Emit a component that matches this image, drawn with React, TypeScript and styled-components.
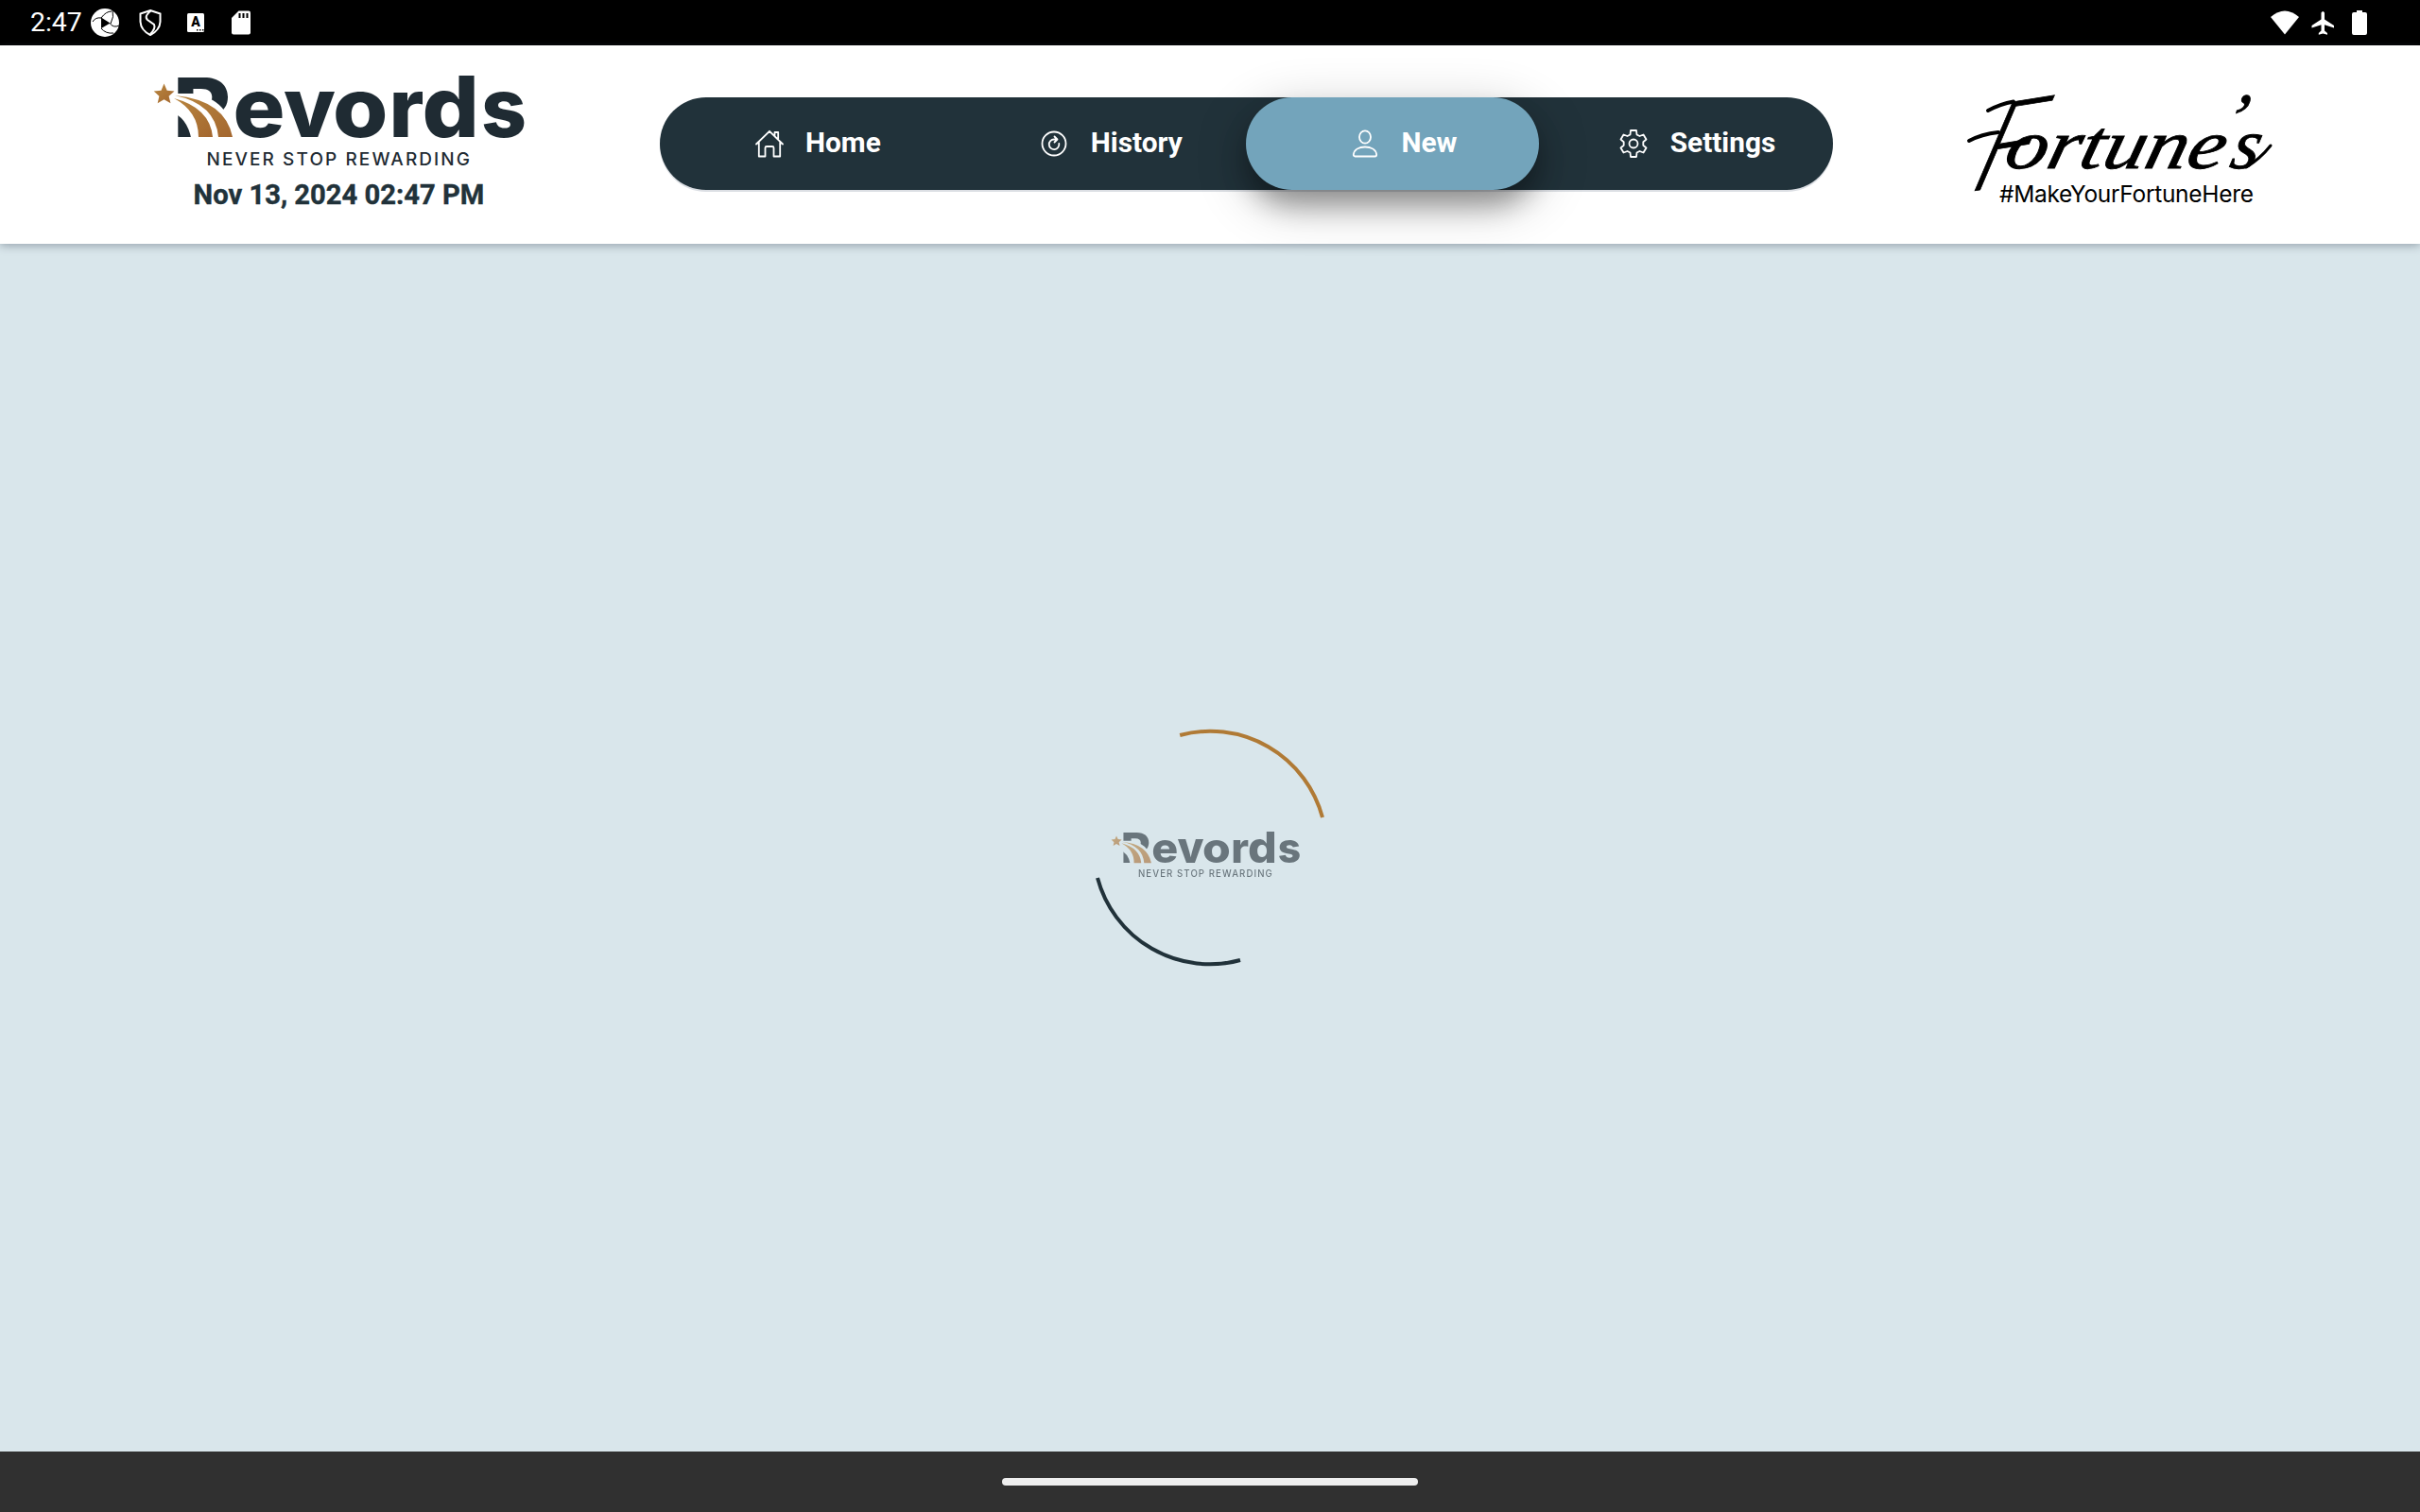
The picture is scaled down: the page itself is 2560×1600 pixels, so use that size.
import React from "react";
import styled, { createGlobalStyle } from "styled-components";

const Global = createGlobalStyle`
  * { box-sizing: border-box; }
  body { margin: 0; background: #d9e6eb; font-family: Roboto, "Liberation Sans", sans-serif; }
  svg { overflow: visible; flex: none; }
`;

const Screen = styled.div`
  display: flex;
  flex-direction: column;
  width: 2560px;
  height: 1600px;
  overflow: hidden;
  background: #d9e6eb;
`;

const StatusBar = styled.div`
  display: flex;
  align-items: center;
  justify-content: space-between;
  height: 48px;
  flex: none;
  background: #000;
  color: #fff;
`;

const StatusGroup = styled.div`
  display: flex;
  align-items: center;
  height: 48px;
`;

const Clock = styled.span`
  width: 64px;
  margin-left: 32px;
  font-size: 28.4px;
  line-height: 48px;
  white-space: nowrap;
`;

const Header = styled.header`
  display: flex;
  height: 210px;
  flex: none;
  background: #fff;
  box-shadow: 0 2px 9px rgba(50, 62, 80, 0.4);
`;

const Brand = styled.div`
  display: flex;
  flex-direction: column;
  width: 698px;
  padding: 24px 0 0 150px;
`;

const DateText = styled.div`
  width: 417px;
  margin-top: 9px;
  text-align: center;
  font-size: 29.2px;
  line-height: 34px;
  font-weight: 700;
  -webkit-text-stroke: 0.4px #21323a;
  color: #21323a;
`;

const Nav = styled.nav`
  display: grid;
  grid-template-columns: repeat(4, 1fr);
  width: 1241px;
  height: 98px;
  margin-top: 55px;
  border-radius: 50px;
  background: #21323a;
  box-shadow: 0 2px 0 #dcdfe4;
`;

const NavItem = styled.a<{ $active?: boolean; $pad: number; $gap: number }>`
  display: flex;
  align-items: center;
  gap: ${(p) => p.$gap}px;
  height: 98px;
  margin: ${(p) => (p.$active ? "0 1px 0 -1px" : "0")};
  padding: 0 0 3px ${(p) => p.$pad}px;
  border-radius: 50px;
  color: #fff;
  font-size: 29.8px;
  font-weight: 700;
  background: ${(p) => (p.$active ? "#73a4bb" : "transparent")};
  box-shadow: ${(p) =>
    p.$active ? "0 18px 28px -2px rgba(0,0,0,.32), 0 14px 56px rgba(0,0,0,.24)" : "none"};
  svg { margin-top: 3px; }
`;

const Partner = styled.div`
  padding: 32px 0 0 121px;
`;

const Main = styled.main`
  display: flex;
  flex: 1;
  align-items: center;
  justify-content: center;
`;

const Loader = styled.div`
  display: grid;
  place-items: center;
  width: 252px;
  height: 252px;
  > * { grid-area: 1 / 1; }
`;

const LoaderLogo = styled.div`
  display: flex;
  opacity: 0.6;
  margin: 13px 9px 0 0;
`;

const GestureBar = styled.footer`
  display: flex;
  justify-content: center;
  height: 64px;
  flex: none;
  padding-top: 28px;
  background: #303030;
`;

const Handle = styled.div`
  width: 440px;
  height: 8px;
  border-radius: 4px;
  background: #eee;
`;

const letters: [string, number, number, number][] = [
  ["e", 96.5, 55, 87],
  ["v", 150, 55, 88],
  ["o", 202, 58.5, 87],
  ["r", 261.5, 37, 87],
  ["d", 296.5, 60.5, 89],
  ["s", 359, 48, 87],
];

const Logo = ({ id, width, height }: { id: string; width: number; height: number }) => (
  <svg width={width} height={height} viewBox="0 0 420 108">
    <defs>
      <linearGradient id={id + "g"} x1="0" y1="0" x2="1" y2="1">
        <stop offset="0" stopColor="#b8863f" />
        <stop offset="1" stopColor="#a4672f" />
      </linearGradient>
      <mask id={id + "m"} maskUnits="userSpaceOnUse" x="0" y="0" width="110" height="100">
        <rect width="110" height="100" fill="#fff" />
        <path d="M30 27 H54 Q78 31 88 46 L110 60 V90 H54 Q53 60 38 50 L30 47Z" fill="#000" />
      </mask>
    </defs>
    <g fontFamily="Inter, 'Open Sans', sans-serif" fontWeight="800" fontSize="86" fill="#1f2b33">
      <g mask={`url(#${id}m)`}>
        <text x="33" y="73" textLength="62" lengthAdjust="spacingAndGlyphs">R</text>
      </g>
      <g fontWeight="780">
        {letters.map(([c, x, w, size]) => (
          <text key={c} x={x} y="73" fontSize={size} textLength={w} lengthAdjust="spacingAndGlyphs">{c}</text>
        ))}
      </g>
    </g>
    <path d="M23.500 16.500 l3.200 7.200 7.800.8-5.900 5.200 1.900 7.600-7-4-6.800 4 1.700-7.600-5.700-5.200 7.800-.8z" fill={`url(#${id}g)`} />
    <path d="M34 32 Q72 42 75 73 H60 Q60 46 34 32Z" fill={`url(#${id}g)`} />
    <path d="M35 29 Q88 34 96 73 H81 Q78 38 35 29Z" fill={`url(#${id}g)`} />
    <text x="68.500" y="103" textLength="278.500" fontFamily="Inter, sans-serif" fontWeight="450" fontSize="19" fill="#1f2b33">NEVER STOP REWARDING</text>
  </svg>
);

const stroke = { fill: "none", stroke: "#fff", strokeWidth: 1.8, strokeLinejoin: "round" as const, strokeLinecap: "round" as const };

const HomeIcon = () => (
  <svg width="30" height="30" viewBox="0 0 30 30" {...stroke}>
    <path d="M1 15.500 15 1.800 29 15.500M3.800 13V28.500H10.500V19.500Q10.500 18 12 18H18Q19.500 18 19.500 19.500V28.500H26.200V13M20.500 6.500V3H24.200V10" />
  </svg>
);
const HistoryIcon = () => (
  <svg width="28" height="30" viewBox="0 0 28 30" {...stroke}>
    <circle cx="14" cy="15" r="12.500" />
    <path d="M16.500 10.500H14A5.300 5.300 0 1 0 19.300 15M14.500 7.500 17.500 10.500 14.500 13.500" />
  </svg>
);
const UserIcon = () => (
  <svg width="28" height="30" viewBox="0 0 28 30" {...stroke}>
    <ellipse cx="14" cy="8" rx="6" ry="6.700" />
    <path d="M1.800 26.500C2.500 21 8 18.500 14 18.500S25.500 21 26.200 26.500Q26.200 28.500 24.500 28.500H3.500Q1.800 28.500 1.800 26.500Z" />
  </svg>
);
const GearIcon = () => (
  <svg width="30" height="30" viewBox="0 0 30 30" {...stroke}>
    <circle cx="15" cy="15" r="4.500" />
    <path d="M12 1H18L18.500 5.500 21.500 7 25.500 5.500 28.500 10.500 25.300 13.200V16.800L28.500 19.500 25.500 24.500 21.500 23 18.500 24.500 18 29H12L11.500 24.500 8.500 23 4.500 24.500 1.500 19.500 4.700 16.800V13.200L1.500 10.500 4.500 5.500 8.500 7 11.500 5.500Z" />
  </svg>
);

const items = [
  { label: "Home", icon: <HomeIcon />, pad: 101, gap: 23 },
  { label: "History", icon: <HistoryIcon />, pad: 93, gap: 24.5 },
  { label: "New", icon: <UserIcon />, pad: 112, gap: 25 },
  { label: "Settings", icon: <GearIcon />, pad: 84, gap: 24 },
];

export default function App() {
  return (
    <Screen>
      <Global />
      <StatusBar>
        <StatusGroup>
          <Clock>2:47</Clock>
          <svg width="180" height="48" viewBox="96 0 180 48">
            <circle cx="111" cy="24" r="15" fill="#fff" />
            <g fill="none" stroke="#000" strokeWidth="1">
              <path d="M107 19Q101 18 98 23M107 19Q112 12 118 12M117 25Q121 18 119 10M116 24.500Q120 30 126 27M107 30Q112 36 120 35" />
            </g>
            <path d="M107 18.500 116.500 24.500 107 30Z" fill="#000" />
            <path d="M159 11 169.500 14.500V23Q169 32 159 37Q149 32 148.500 23V14.500Z" fill="none" stroke="#fff" strokeWidth="2" />
            <path d="M160 11Q152 17 156 21L163 26Q165 30 159 36" fill="none" stroke="#fff" strokeWidth="2" />
            <rect x="198" y="14" width="18" height="20" rx="1.500" fill="#fff" />
            <text x="207" y="28" textAnchor="middle" fontFamily="Roboto, sans-serif" fontWeight="900" fontSize="14">A</text>
            <path d="M208 31h1.500v1.500h-1.500zM211 31h1.500v1.500h-1.500zM214 31h1.500v1.500h-1.500z" />
            <path d="M252.500 11.500H263Q265 11.500 265 13.500V34.500Q265 36.500 263 36.500H247Q245 36.500 245 34.500V19Z" fill="#fff" />
            <path d="M252.500 14h2v5h-2zM256.500 14h2v5h-2zM260.500 14h2v5h-2z" />
          </svg>
        </StatusGroup>
        <StatusGroup>
          <svg width="160" height="48" viewBox="2400 0 160 48" fill="#fff">
            <path d="M2402 18Q2417 5 2432 18L2417 36.500Z" />
            <path d="M2455.500 13.500Q2457.300 10.500 2459 13.500V20.500L2469 27V29.500L2459 26.300V32.500L2462 35V36.800L2457.300 35.500 2452.800 36.800V35L2455.500 32.500V26.300L2445.500 29.500V27L2455.500 20.500Z" />
            <path d="M2493 11H2499V13H2502Q2504 13 2504 15V35Q2504 37 2502 37H2490Q2488 37 2488 35V15Q2488 13 2490 13H2493Z" />
          </svg>
        </StatusGroup>
      </StatusBar>
      <Header>
        <Brand>
          <Logo id="top" width={420} height={108} />
          <DateText>Nov 13, 2024 02:47 PM</DateText>
        </Brand>
        <Nav>
          {items.map((i) => (
            <NavItem key={i.label} $active={i.label === "New"} $pad={i.pad} $gap={i.gap}>
              {i.icon}
              {i.label}
            </NavItem>
          ))}
        </Nav>
        <Partner>
          <svg width="360" height="150" viewBox="0 0 360 150" fill="#000">
            <g transform="translate(22 123) skewY(-9) skewX(-19)" fontFamily="Lato, sans-serif" fontStyle="italic" fontWeight="300" stroke="#000" strokeWidth="0.800">
              <text fontSize="124" textLength="60" lengthAdjust="spacingAndGlyphs">F</text>
            </g>
            <g fill="none" stroke="#000" strokeLinecap="round">
              <path d="M43 37Q56 30 70 27.500" strokeWidth="4" />
              <path d="M23 69Q36 62 54 60" strokeWidth="4" />
              <path d="M316 97Q331 88 342 74" strokeWidth="3" />
            </g>
            <g stroke="#000" strokeWidth="0.900" fontFamily="'Liberation Serif', serif" fontStyle="italic" transform="translate(0 98) skewX(-14)">
              <text x="58" y="0" fontSize="74" textLength="232" lengthAdjust="spacingAndGlyphs">ortune</text>
              <text x="280" y="-28" fontSize="74">’</text>
              <text x="297" y="0" fontSize="76">s</text>
            </g>
            <text x="55" y="134" fontFamily="Inter, sans-serif" fontSize="24.500" textLength="269">#MakeYourFortuneHere</text>
          </svg>
        </Partner>
      </Header>
      <Main>
        <Loader>
          <svg width="252" height="252" viewBox="1154 771 252 252" fill="none" strokeWidth="4">
            <path d="M1248.200 778A123 123 0 0 1 1399 865" stroke="#b07a35" />
            <path d="M1161 929A123 123 0 0 0 1312 1016" stroke="#21323a" />
          </svg>
          <LoaderLogo>
            <Logo id="load" width={214} height={55} />
          </LoaderLogo>
        </Loader>
      </Main>
      <GestureBar>
        <Handle />
      </GestureBar>
    </Screen>
  );
}
